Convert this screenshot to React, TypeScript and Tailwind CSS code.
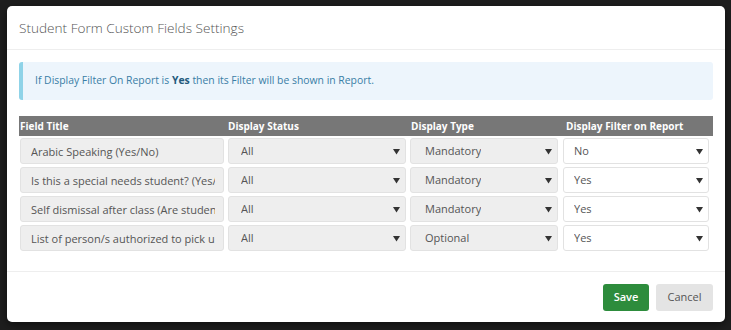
const rows = [
  { title: "Arabic Speaking (Yes/No)", status: "All", type: "Mandatory", filter: "No" },
  { title: "Is this a special needs student? (Yes/No)", status: "All", type: "Mandatory", filter: "Yes" },
  { title: "Self dismissal after class (Are students allowed)", status: "All", type: "Mandatory", filter: "Yes" },
  { title: "List of person/s authorized to pick up", status: "All", type: "Optional", filter: "Yes" },
];

function Arrow() {
  return (
    <svg width="7" height="7" viewBox="0 0 7 7" className="shrink-0">
      <path d="M0 1h7L3.5 6.5z" fill="#333" />
    </svg>
  );
}

function SelectCell({ value, white, pad }: { value: string; white?: boolean; pad: string }) {
  return (
    <div
      className={`flex h-[26px] items-center justify-between rounded-[3px] border border-[#e2e2e2] pr-[5px] ${pad} ${
        white ? "bg-white" : "bg-[#eeeeee]"
      }`}
    >
      <span className="truncate">{value}</span>
      <Arrow />
    </div>
  );
}

export default function App() {
  return (
    <div className="h-[330px] w-[731px] bg-[#1e1e1e] pt-[6px] pl-[7px] font-['Open_Sans',sans-serif]">
      <div className="h-[316px] w-[718px] rounded-[5px] bg-white shadow-[0_3px_9px_rgba(0,0,0,0.5)]">
        <div className="flex h-[44px] items-center border-b border-[#eeeeee] px-[12px] pt-[1px]">
          <h1 className="text-[13.6px] font-light text-[#555]">Student Form Custom Fields Settings</h1>
        </div>

        <div className="px-[12px] pt-[12px]">
          <div className="flex h-[38px] items-center rounded-[3px] border-l-[4px] border-[#8fd3e8] bg-[#edf5fc] pl-[12px] text-[10.4px] text-[#3a7ea6]">
            If Display Filter On Report is&nbsp;<b className="font-bold text-[#245a7c]">Yes</b>&nbsp;then its Filter will be shown in Report.
          </div>

          <div className="mt-[16px]">
            <div className="grid h-[20px] grid-cols-[204px_178px_148px_147px] items-center gap-x-[4px] bg-[#777777] pl-[1px] pr-[3px] text-[10px] font-bold text-white">
              <span>Field Title</span>
              <span>Display Status</span>
              <span className="pl-[1px]">Display Type</span>
              <span className="pl-[4px]">Display Filter on Report</span>
            </div>
            <div className="grid grid-cols-[204px_178px_148px_147px] gap-x-[4px] gap-y-[3px] pl-[1px] pr-[3px] pt-[2px] text-[11px] text-[#555]">
              {rows.map((r) => (
                <>
                  <input
                    readOnly
                    value={r.title}
                    className="h-[26px] w-full rounded-[3px] border border-[#e2e2e2] bg-[#eeeeee] pl-[10px] pr-[8px] text-[11px] text-[#555] outline-none"
                  />
                  <SelectCell value={r.status} pad="pl-[12px]" />
                  <SelectCell value={r.type} pad="pl-[14px]" />
                  <SelectCell value={r.filter} white pad="pl-[10px] ml-[1px]" />
                </>
              ))}
            </div>
          </div>
        </div>

        <div className="mt-[20px] flex justify-end gap-[7px] border-t border-[#eeeeee] px-[12px] pt-[12px]">
          <button className="h-[27px] w-[46px] rounded-[3px] bg-[#2d8c3c] text-[11px] font-semibold text-white">Save</button>
          <button className="h-[27px] w-[57px] rounded-[3px] bg-[#e4e4e4] text-[11px] text-[#555]">Cancel</button>
        </div>
      </div>
    </div>
  );
}
